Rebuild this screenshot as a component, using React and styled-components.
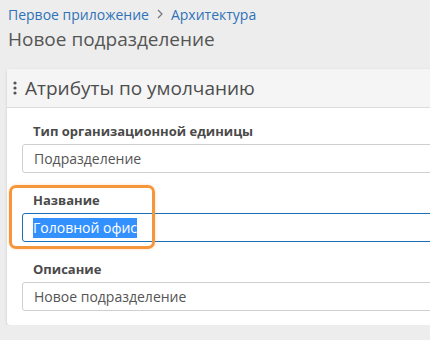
import styled, { createGlobalStyle, css } from "styled-components";

const GlobalStyle = createGlobalStyle`
  html, body {
    margin: 0;
    padding: 0;
    background: #ededed;
    font-family: "Open Sans", "Noto Sans", sans-serif;
    overflow: hidden;
  }
`;

const fields = [
  { id: 1, label: "Тип организационной единицы", value: "Подразделение" },
  { id: 2, label: "Название", value: "Головной офис", focused: true },
  { id: 3, label: "Описание", value: "Новое подразделение" },
];

const Page = styled.div`
  padding: 4px 0 0 7px;
  width: 450px;
`;

const Breadcrumbs = styled.nav`
  display: flex;
  align-items: center;
  gap: 7px;
  height: 20px;
  padding-left: 1px;
  font-size: 14px;
  color: #2f72b7;
`;

const Crumb = styled.span`
  white-space: nowrap;
`;

const Chevron = styled.svg`
  width: 8px;
  height: 10px;
`;

const Title = styled.h1`
  margin: 2px 0 0 1px;
  height: 43px;
  font-size: 19px;
  font-weight: 400;
  line-height: 26px;
  color: #555;
`;

const Card = styled.section`
  background: #fff;
  border-radius: 3px 0 0 3px;
  box-shadow: 0 1px 3px rgba(0, 0, 0, 0.15);
`;

const CardHeader = styled.header`
  display: flex;
  align-items: center;
  gap: 8px;
  height: 38px;
  padding-left: 6px;
  background: #f5f5f5;
  border-bottom: 1px solid #dcdcdc;
  border-radius: 3px 0 0 0;
  font-size: 19px;
  color: #4d4d4d;
`;

const CardBody = styled.div`
  display: flex;
  flex-direction: column;
  gap: 18px;
  padding: 14px 0 14px 15px;
`;

const Field = styled.div`
  position: relative;
  display: flex;
  flex-direction: column;
  gap: 4px;
`;

const Label = styled.label`
  padding-left: 11px;
  font-size: 13px;
  font-weight: 700;
  line-height: 18px;
  color: #4a4a4a;
`;

const InputBox = styled.div`
  box-sizing: border-box;
  height: 29px;
  display: flex;
  align-items: center;
  padding-left: 11px;
  border: 1px solid #cfcfcf;
  border-radius: 3px;
  font-size: 14px;
  color: #555;
  white-space: nowrap;
  ${({ $focused }) =>
    $focused &&
    css`
      border-color: #1b6fb7;
      padding-left: 10px;
    `}
`;

const Selected = styled.span`
  display: inline-block;
  width: 104px;
  overflow: hidden;
  background: #3390ff;
  color: #fff;
  line-height: 20px;
`;

const Highlight = styled.div`
  position: absolute;
  left: -13px;
  top: -6px;
  width: 146px;
  height: 64px;
  box-sizing: border-box;
  border: 3px solid #f5963a;
  border-radius: 7px;
  box-shadow: 0 0 3px rgba(245, 150, 58, 0.35);
  pointer-events: none;
`;

function DotsIcon() {
  return (
    <svg width="4" height="14" viewBox="0 0 4 14">
      <circle cx="2" cy="2" r="1.6" fill="#555" />
      <circle cx="2" cy="7" r="1.6" fill="#555" />
      <circle cx="2" cy="12" r="1.6" fill="#555" />
    </svg>
  );
}

export default function App() {
  return (
    <>
      <GlobalStyle />
      <Page>
        <Breadcrumbs>
          <Crumb>Первое приложение</Crumb>
          <Chevron viewBox="0 0 8 10">
            <path d="M2 1l4 4-4 4" fill="none" stroke="#777" strokeWidth="1.2" />
          </Chevron>
          <Crumb>Архитектура</Crumb>
        </Breadcrumbs>
        <Title>Новое подразделение</Title>
        <Card>
          <CardHeader>
            <DotsIcon />
            Атрибуты по умолчанию
          </CardHeader>
          <CardBody>
            {fields.map((f) => (
              <Field key={f.id}>
                <Label>{f.label}</Label>
                <InputBox $focused={f.focused}>
                  {f.focused ? <Selected>{f.value}</Selected> : f.value}
                </InputBox>
                {f.focused && <Highlight />}
              </Field>
            ))}
          </CardBody>
        </Card>
      </Page>
    </>
  );
}
